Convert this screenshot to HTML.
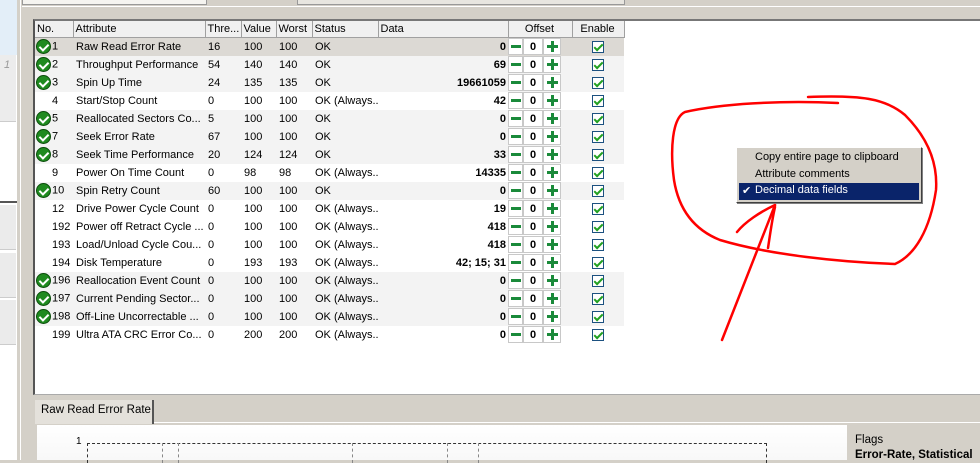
<!DOCTYPE html>
<html><head><meta charset="utf-8"><style>
*{margin:0;padding:0;box-sizing:border-box}
body{width:980px;height:460px;overflow:hidden;background:#d4d0c8;font-family:"Liberation Sans",sans-serif;font-size:11px;color:#000;position:relative}
.a{position:absolute}
table{border-collapse:collapse;table-layout:fixed;position:absolute;left:35px;top:21px;width:589px}
td,th{height:18px;padding:0 3px;white-space:nowrap;overflow:hidden;font-weight:normal;text-align:left}
th{height:16px;background:#f0f0f0;border-right:1px solid #a0a0a0;border-bottom:1px solid #a0a0a0;padding-left:2px}
tr.g td{background:#f3f3f3}
tr.s td{background:#dcd9d4}
td.d{text-align:right;font-weight:bold;padding-right:2px}
.ic{display:inline-block;width:15px;height:15px;border-radius:50%;background:#1f8a1f;border:1px solid #0b4d0b;vertical-align:middle;position:relative;margin-left:-2px;margin-right:1px}
.ic:after{content:"";position:absolute;left:4px;top:2px;width:4px;height:7px;border:solid #fff;border-width:0 2px 2px 0;transform:rotate(45deg)}
.sp{display:inline-block;width:14px}
.off{display:flex;align-items:center;height:18px}
.m,.p,.v{height:17px;border:1px solid #c8c8c8;background:#fff;display:flex;align-items:center;justify-content:center}
.m{width:15px}.v{width:20px;font-weight:bold}.p{width:18px}
.m i{display:block;width:10px;height:3px;background:#1a8a3a}
.p i{display:block;width:11px;height:11px;background:linear-gradient(#1a8a3a,#1a8a3a) center/3px 11px no-repeat,linear-gradient(#1a8a3a,#1a8a3a) center/11px 3px no-repeat}
.cb{display:inline-block;width:12px;height:12px;border:1px solid #1c5180;background:#fff;position:relative;vertical-align:middle}
.cb:after{content:"";position:absolute;left:3px;top:0px;width:3px;height:7px;border:solid #22a022;border-width:0 2px 2px 0;transform:rotate(45deg)}
</style></head><body>
<div class="a" style="left:0;top:0;width:17px;height:460px;background:#fff"></div>
<div class="a" style="left:0;top:0;width:17px;height:55px;background:#e3eef8"></div>
<div class="a" style="left:0;top:55px;width:16px;height:67px;background:#ececec;border-bottom:1px solid #ccc"></div>
<div class="a" style="left:4px;top:59px;color:#999;font-style:italic">1</div>
<div class="a" style="left:0;top:201px;width:17px;height:2px;background:#555"></div>
<div class="a" style="left:0;top:205px;width:16px;height:45px;background:#ebebeb;border-bottom:1px solid #ccc"></div>
<div class="a" style="left:0;top:253px;width:16px;height:45px;background:#ebebeb;border-bottom:1px solid #ccc"></div>
<div class="a" style="left:0;top:300px;width:16px;height:45px;background:#ebebeb;border-bottom:1px solid #ccc"></div>
<div class="a" style="left:20px;top:0;width:1px;height:460px;background:#fff"></div>
<div class="a" style="left:22px;top:0;width:185px;height:5px;background:#f5f4f0;border:1px solid #999;border-top:none"></div>
<div class="a" style="left:297px;top:0;width:328px;height:5px;background:#e8e6e0;border:1px solid #999;border-top:none"></div>
<div class="a" style="left:22px;top:6px;width:958px;height:1px;background:#fff"></div>
<div class="a" style="left:33px;top:19px;width:947px;height:376px;background:#fff;border-left:2px solid #555;border-top:2px solid #777;border-bottom:1px solid #aaa"></div>
<table>
<colgroup><col style="width:38px"><col style="width:132px"><col style="width:36px"><col style="width:35px"><col style="width:36px"><col style="width:66px"><col style="width:130px"><col style="width:64px"><col style="width:52px"></colgroup>
<tr><th>No.</th><th>Attribute</th><th>Thre...</th><th>Value</th><th>Worst</th><th>Status</th><th>Data</th><th style="text-align:center">Offset</th><th style="text-align:center">Enable</th></tr>
<tr class="s"><td><span class="ic"></span>1</td><td>Raw Read Error Rate</td><td>16</td><td>100</td><td>100</td><td>OK</td><td class="d">0</td><td style="padding:0"><div class="off"><div class="m"><i></i></div><div class="v">0</div><div class="p"><i></i></div></div></td><td style="text-align:center"><span class="cb"></span></td></tr>
<tr class="g"><td><span class="ic"></span>2</td><td>Throughput Performance</td><td>54</td><td>140</td><td>140</td><td>OK</td><td class="d">69</td><td style="padding:0"><div class="off"><div class="m"><i></i></div><div class="v">0</div><div class="p"><i></i></div></div></td><td style="text-align:center"><span class="cb"></span></td></tr>
<tr class="g"><td><span class="ic"></span>3</td><td>Spin Up Time</td><td>24</td><td>135</td><td>135</td><td>OK</td><td class="d">19661059</td><td style="padding:0"><div class="off"><div class="m"><i></i></div><div class="v">0</div><div class="p"><i></i></div></div></td><td style="text-align:center"><span class="cb"></span></td></tr>
<tr><td><span class="sp"></span>4</td><td>Start/Stop Count</td><td>0</td><td>100</td><td>100</td><td>OK (Always...</td><td class="d">42</td><td style="padding:0"><div class="off"><div class="m"><i></i></div><div class="v">0</div><div class="p"><i></i></div></div></td><td style="text-align:center"><span class="cb"></span></td></tr>
<tr class="g"><td><span class="ic"></span>5</td><td>Reallocated Sectors Co...</td><td>5</td><td>100</td><td>100</td><td>OK</td><td class="d">0</td><td style="padding:0"><div class="off"><div class="m"><i></i></div><div class="v">0</div><div class="p"><i></i></div></div></td><td style="text-align:center"><span class="cb"></span></td></tr>
<tr class="g"><td><span class="ic"></span>7</td><td>Seek Error Rate</td><td>67</td><td>100</td><td>100</td><td>OK</td><td class="d">0</td><td style="padding:0"><div class="off"><div class="m"><i></i></div><div class="v">0</div><div class="p"><i></i></div></div></td><td style="text-align:center"><span class="cb"></span></td></tr>
<tr class="g"><td><span class="ic"></span>8</td><td>Seek Time Performance</td><td>20</td><td>124</td><td>124</td><td>OK</td><td class="d">33</td><td style="padding:0"><div class="off"><div class="m"><i></i></div><div class="v">0</div><div class="p"><i></i></div></div></td><td style="text-align:center"><span class="cb"></span></td></tr>
<tr><td><span class="sp"></span>9</td><td>Power On Time Count</td><td>0</td><td>98</td><td>98</td><td>OK (Always...</td><td class="d">14335</td><td style="padding:0"><div class="off"><div class="m"><i></i></div><div class="v">0</div><div class="p"><i></i></div></div></td><td style="text-align:center"><span class="cb"></span></td></tr>
<tr class="g"><td><span class="ic"></span>10</td><td>Spin Retry Count</td><td>60</td><td>100</td><td>100</td><td>OK</td><td class="d">0</td><td style="padding:0"><div class="off"><div class="m"><i></i></div><div class="v">0</div><div class="p"><i></i></div></div></td><td style="text-align:center"><span class="cb"></span></td></tr>
<tr><td><span class="sp"></span>12</td><td>Drive Power Cycle Count</td><td>0</td><td>100</td><td>100</td><td>OK (Always...</td><td class="d">19</td><td style="padding:0"><div class="off"><div class="m"><i></i></div><div class="v">0</div><div class="p"><i></i></div></div></td><td style="text-align:center"><span class="cb"></span></td></tr>
<tr><td><span class="sp"></span>192</td><td>Power off Retract Cycle ...</td><td>0</td><td>100</td><td>100</td><td>OK (Always...</td><td class="d">418</td><td style="padding:0"><div class="off"><div class="m"><i></i></div><div class="v">0</div><div class="p"><i></i></div></div></td><td style="text-align:center"><span class="cb"></span></td></tr>
<tr><td><span class="sp"></span>193</td><td>Load/Unload Cycle Cou...</td><td>0</td><td>100</td><td>100</td><td>OK (Always...</td><td class="d">418</td><td style="padding:0"><div class="off"><div class="m"><i></i></div><div class="v">0</div><div class="p"><i></i></div></div></td><td style="text-align:center"><span class="cb"></span></td></tr>
<tr><td><span class="sp"></span>194</td><td>Disk Temperature</td><td>0</td><td>193</td><td>193</td><td>OK (Always...</td><td class="d">42; 15; 31</td><td style="padding:0"><div class="off"><div class="m"><i></i></div><div class="v">0</div><div class="p"><i></i></div></div></td><td style="text-align:center"><span class="cb"></span></td></tr>
<tr class="g"><td><span class="ic"></span>196</td><td>Reallocation Event Count</td><td>0</td><td>100</td><td>100</td><td>OK (Always...</td><td class="d">0</td><td style="padding:0"><div class="off"><div class="m"><i></i></div><div class="v">0</div><div class="p"><i></i></div></div></td><td style="text-align:center"><span class="cb"></span></td></tr>
<tr class="g"><td><span class="ic"></span>197</td><td>Current Pending Sector...</td><td>0</td><td>100</td><td>100</td><td>OK (Always...</td><td class="d">0</td><td style="padding:0"><div class="off"><div class="m"><i></i></div><div class="v">0</div><div class="p"><i></i></div></div></td><td style="text-align:center"><span class="cb"></span></td></tr>
<tr class="g"><td><span class="ic"></span>198</td><td>Off-Line Uncorrectable ...</td><td>0</td><td>100</td><td>100</td><td>OK (Always...</td><td class="d">0</td><td style="padding:0"><div class="off"><div class="m"><i></i></div><div class="v">0</div><div class="p"><i></i></div></div></td><td style="text-align:center"><span class="cb"></span></td></tr>
<tr><td><span class="sp"></span>199</td><td>Ultra ATA CRC Error Co...</td><td>0</td><td>200</td><td>200</td><td>OK (Always...</td><td class="d">0</td><td style="padding:0"><div class="off"><div class="m"><i></i></div><div class="v">0</div><div class="p"><i></i></div></div></td><td style="text-align:center"><span class="cb"></span></td></tr>
</table>
<div class="a" style="left:35px;top:400px;width:119px;height:24px;background:#e4e1db;border-right:2px solid #555;padding:4px 0 0 6px;font-size:11.5px">Raw Read Error Rate</div>
<div class="a" style="left:154px;top:422px;width:826px;height:1px;background:#fff"></div>
<div class="a" style="left:37px;top:425px;width:810px;height:35px;background:linear-gradient(#fff,#f8f8f8)"></div>
<div class="a" style="left:76px;top:436px;font-size:10px">1</div>
<div class="a" style="left:87px;top:443px;width:680px;height:20px;border:1px dashed #333;border-bottom:none"></div>
<div class="a" style="left:162px;top:443px;height:20px;border-left:1px dashed #888"></div>
<div class="a" style="left:178px;top:443px;height:20px;border-left:1px dashed #888"></div>
<div class="a" style="left:352px;top:443px;height:20px;border-left:1px dashed #888"></div>
<div class="a" style="left:447px;top:443px;height:20px;border-left:1px dashed #888"></div>
<div class="a" style="left:478px;top:443px;height:20px;border-left:1px dashed #888"></div>
<div class="a" style="left:855px;top:434px;font-size:11.5px">Flags</div>
<div class="a" style="left:855px;top:449px;font-size:11.5px;font-weight:bold">Error-Rate, Statistical</div>
<div class="a" style="left:736px;top:147px;width:186px;height:56px;background:#d4d0c8;border:1px solid;border-color:#fff #404040 #404040 #fff;box-shadow:1px 1px 0 #808080"></div>
<div class="a" style="left:755px;top:151px;font-size:11px">Copy entire page to clipboard</div>
<div class="a" style="left:755px;top:168px;font-size:11px">Attribute comments</div>
<div class="a" style="left:739px;top:183px;width:180px;height:17px;background:#0a246a;color:#fff;padding:1px 0 0 16px;font-size:11px">Decimal data fields</div>
<div class="a" style="left:742px;top:184px;color:#fff;font-size:11px">✔</div>
<svg class="a" style="left:0;top:0" width="980" height="460">
<g fill="none" stroke="#f00" stroke-width="2.5" stroke-linecap="round" stroke-linejoin="round">
<path d="M838,103 C780,100 720,104 685,112 C672,118 670,150 674,180 C678,205 690,228 720,240 C770,255 840,262 895,264 C915,255 930,230 936,190 C938,160 925,135 905,115 C885,98 860,95 808,97"/>
<path d="M722,340 L775,205"/>
<path d="M737,232 C745,222 760,212 775,205"/>
<path d="M768,248 C770,235 772,220 775,207"/>
</g></svg>
</body></html>
